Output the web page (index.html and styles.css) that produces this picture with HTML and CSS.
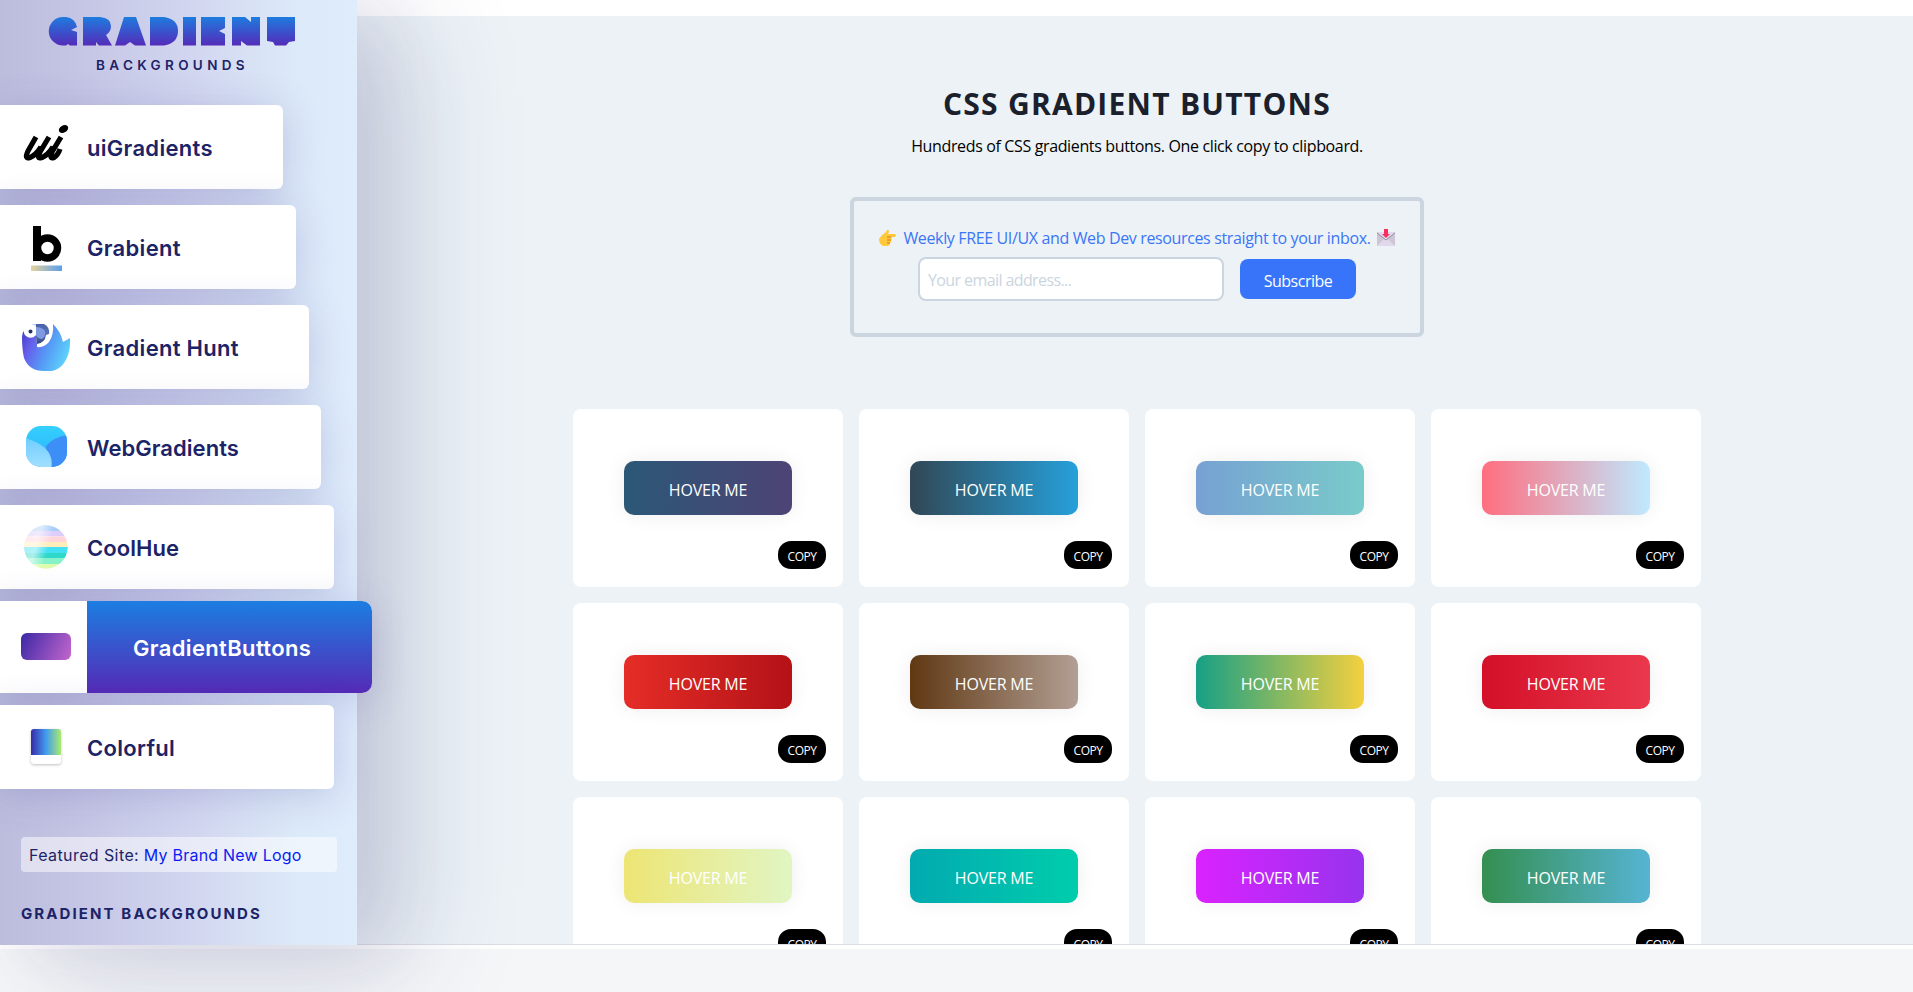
FILE: index.html
```html
<!DOCTYPE html>
<html lang="en">
<head>
<meta charset="utf-8">
<title>CSS Gradient Buttons</title>
<link rel="stylesheet" href="styles.css">
</head>
<body>
<div class="layout">
  <aside class="sidebar">
    <header class="brand">
      <svg class="wordmark" width="248" height="30" viewBox="0 0 248 30" role="img" aria-label="Gradient">
        <defs><linearGradient id="wm" x1="0" y1="0" x2="0" y2="30" gradientUnits="userSpaceOnUse"><stop offset="0" stop-color="#1c7ee0"/><stop offset="1" stop-color="#552ab8"/></linearGradient></defs>
        <g fill="url(#wm)">
          <rect x="135" y="1" width="13" height="28.500"/>
          <path d="M15 1H18Q27 2 29 11L23 14 29 16V29.500H22L20 28 18 29.500H15A14 14 0 0 1 15 1Z"/>
          <path d="M35 1H52Q63 2 63 10 63 16 58 19L64 29.500H51L48 26V29.500H35Z"/>
          <polygon points="76,1 88,1 98,29.500 87,29.500 82,26 77,29.500 67,29.500"/>
          <path d="M102 1H116Q130 3 130 15T116 29.500H102Z"/>
          <polygon points="153,1 177,1 177,12 171,15 177,18 177,29.500 153,29.500"/>
          <polygon points="184,1 197,1 203,6 203,1 212,1 212,29.500 199,29.500 193,25 193,29.500 184,29.500"/>
          <polygon points="219,1 247,1 247,25 241,26 238,29.500 227,29.500 225,26 219,25"/>
        </g>
      </svg>
      <p class="tagline">BACKGROUNDS</p>
    </header>
    <nav class="nav">
      <a class="item w1"><span class="icon">
        <svg width="48" height="48" viewBox="0 0 48 48"><g fill="none" stroke="#000" stroke-linejoin="round"><path stroke-width="5.200" d="M14 14 6 28Q2 36.500 8 34.500 14 32 19 24M27 14 18 29Q14 36.500 20 34.500 26 32 31 24M39 14 30 29Q27 36.500 32 34.500 36 32 38 26"/></g><ellipse cx="41.500" cy="6" rx="5" ry="3.500" transform="rotate(-30 41.500 6)"/></svg>
      </span><span class="label">uiGradients</span></a>
      <a class="item w2"><span class="icon">
        <svg width="48" height="48" viewBox="0 0 48 48"><defs><linearGradient id="gb"><stop stop-color="#e6d39c"/><stop offset="1" stop-color="#5a9eec"/></linearGradient></defs><path d="M11 3h8v35h-8z"/><circle cx="25.500" cy="25" r="10" fill="none" stroke="#000" stroke-width="7.500"/><path fill="url(#gb)" d="M9 42.500h31V49H9z"/></svg>
      </span><span class="label">Grabient</span></a>
      <a class="item w3"><span class="icon">
        <svg width="48" height="48" viewBox="0 0 48 48"><defs><linearGradient id="gh" x1="0" y1=".3" x2="1" y2=".7"><stop stop-color="#4a45cc"/><stop offset=".2" stop-color="#665fec"/><stop offset=".55" stop-color="#559bf6"/><stop offset="1" stop-color="#5fdafb"/></linearGradient><linearGradient id="bk" x1="0" y1="0" x2="0" y2="1"><stop stop-color="#4862a9"/><stop offset=".5" stop-color="#5873b8"/><stop offset="1" stop-color="#34457c"/></linearGradient></defs><path fill="url(#gh)" d="M14 1H30L31 1Q39 9 41 19L48 15Q49 30 42 40T22 48Q7 48 2 35Q0 26 0 14 1 2 14 1Z"/><path fill="#c5eafd" d="M1 9Q4 1 15 1V10L8 7Z"/><circle cx="8.500" cy="8" r="6.800" fill="#fff"/><circle cx="8.500" cy="8.500" r="2" fill="#223463"/><path fill="#fff" d="M14 1H31Q32 12 27 19 22 25 15 24V21L14 14Z"/><path fill="url(#bk)" d="M14 1H22Q28 4 27 11L24 12Q23 20 15 21L14 14Z"/><path fill="#7f9ae0" d="M14 4Q20 4 23 8 24 13 20 16 16 16 14 12Z"/></svg>
      </span><span class="label">Gradient Hunt</span></a>
      <a class="item w4"><span class="icon">
        <svg width="48" height="48" viewBox="0 0 48 48"><defs><clipPath id="wc"><rect x="4" y="3" width="41" height="41" rx="15"/></clipPath><linearGradient id="wa" x1="0" y1="0" x2="0" y2="1"><stop stop-color="#34d0ff"/><stop offset="1" stop-color="#2cadf5"/></linearGradient><linearGradient id="wb" x1="0" y1="0" x2="0" y2="1"><stop stop-color="#70ceff"/><stop offset="1" stop-color="#a4e0ff"/></linearGradient></defs><g clip-path="url(#wc)"><path fill="url(#wa)" d="M4 3h41v41H4z"/><path fill="#3e8ef7" d="M24 23Q33 13 48 12V46H26Z"/><path fill="url(#wb)" d="M3 15Q34 24 29 46H0Z"/></g></svg>
      </span><span class="label tight">WebGradients</span></a>
      <a class="item w5"><span class="icon">
        <svg width="48" height="48" viewBox="0 0 48 48"><defs><clipPath id="cc"><circle cx="24" cy="24" r="21.700"/></clipPath><linearGradient id="cg" x1="0" y1="0" x2="1" y2=".3"><stop offset=".1" stop-color="#fff" stop-opacity=".5"/><stop offset=".4" stop-color="#fff" stop-opacity=".6"/><stop offset=".65" stop-color="#fff" stop-opacity="0"/></linearGradient></defs><g clip-path="url(#cc)"><path fill="#a7cdf6" d="M0 0h48v8H0z"/><path fill="#dccdfb" d="M0 8h48v5.500H0z"/><path fill="#ffd5da" d="M0 13.500h48V19H0z"/><path fill="#feecb9" d="M0 19h48v5H0z"/><path fill="#43dff2" d="M0 24h48v6H0z"/><path fill="#30d8ca" d="M0 30h48v5H0z"/><path fill="#86f2c9" d="M0 35h48v6H0z"/><path fill="#dcfcab" d="M0 41h48v7H0z"/><path fill="url(#cg)" d="M0 0h48v48H0z"/></g></svg>
      </span><span class="label tight">CoolHue</span></a>
      <a class="item active"><span class="icon"><i class="pill"></i></span><span class="label">GradientButtons</span></a>
      <a class="item w5"><span class="icon"><i class="swatch"></i></span><span class="label">Colorful</span></a>
    </nav>
    <p class="featured"><span class="wide">Featured Site:</span> <a>My Brand New Logo</a></p>
    <h2 class="foot">GRADIENT BACKGROUNDS</h2>
  </aside>
  <main class="main">
    <h1>CSS GRADIENT BUTTONS</h1>
    <p class="sub">Hundreds of CSS gradients buttons. One click copy to clipboard.</p>
    <form class="signup">
      <p class="pitch">
        <svg width="18" height="18" viewBox="0 0 18 18"><path fill="#ffc83d" d="M0 10Q2 6 7 3L8 1Q10 0 10 3L9 5H16Q18 6 16 8H12Q14 9 12 11 13 13 11 14 11 17 8 17H4Q0 15 0 10Z"/><path stroke="#d67d00" fill="none" d="M8 8H12M8 11H12M8 14H11"/></svg>
        <span>Weekly FREE UI/UX and Web Dev resources straight to your inbox.</span>
        <svg width="18" height="18" viewBox="0 0 18 18"><path fill="#e1d8ec" d="M0 3h18v14H0z"/><path fill="#cdc4d6" d="M0 3 9 11 18 3V17L11 10H7L0 17Z"/><path stroke="#998ea4" fill="none" d="M0 4 9 11 18 4"/><path fill="#f92f60" d="M7 0h4v5h2L9 9 5 5h2z"/></svg>
      </p>
      <div class="fields"><input type="text" placeholder="Your email address..."><button class="subscribe" type="button">Subscribe</button></div>
    </form>
    <section class="grid">
      <article class="card"><button class="btn g1">HOVER ME</button><button class="copy">COPY</button></article>
      <article class="card"><button class="btn g2">HOVER ME</button><button class="copy">COPY</button></article>
      <article class="card"><button class="btn g3">HOVER ME</button><button class="copy">COPY</button></article>
      <article class="card"><button class="btn g4">HOVER ME</button><button class="copy">COPY</button></article>
      <article class="card"><button class="btn g5">HOVER ME</button><button class="copy">COPY</button></article>
      <article class="card"><button class="btn g6">HOVER ME</button><button class="copy">COPY</button></article>
      <article class="card"><button class="btn g7">HOVER ME</button><button class="copy">COPY</button></article>
      <article class="card"><button class="btn g8">HOVER ME</button><button class="copy">COPY</button></article>
      <article class="card"><button class="btn g9">HOVER ME</button><button class="copy">COPY</button></article>
      <article class="card"><button class="btn g10">HOVER ME</button><button class="copy">COPY</button></article>
      <article class="card"><button class="btn g11">HOVER ME</button><button class="copy">COPY</button></article>
      <article class="card"><button class="btn g12">HOVER ME</button><button class="copy">COPY</button></article>
    </section>
  </main>
</div>
</body>
</html>
```
FILE: styles.css
```css
* { box-sizing: border-box; }
html { background: #f4f6f8; }
body { margin: 0; height: 992px; overflow: hidden; font-family: "Open Sans", sans-serif; font-size: 16px; }
p, h1, h2 { margin: 0; }
button, input { font: inherit; letter-spacing: inherit; }
.layout { display: flex; height: 949px; background: #fff; }

/* Sidebar */
.sidebar { position: relative; z-index: 1; flex: none; width: 357px; height: 945px; display: flex; flex-direction: column; font-family: Inter, sans-serif; color: #1c2367; background: linear-gradient(90deg, #bcbddd 0%, #c3c3e3 18%, #d1d5ef 52%, #dce9f8 82%, #dfecfc 100%); box-shadow: 50px 20px 110px rgba(50, 50, 115, .18), 30px 10px 60px rgba(50, 50, 115, .07); }
.brand { height: 105px; padding: 16px 0 0 48px; }
.wordmark { display: block; }
.tagline { margin: 11px 0 0 48px; font-size: 13.500px; line-height: 17px; font-weight: 600; letter-spacing: 4.350px; }
.nav { display: flex; flex-direction: column; gap: 16px; }
.item { display: flex; align-items: center; height: 84px; padding-left: 22px; background: #fff; border-radius: 0 6px 6px 0; box-shadow: 0 6px 38px rgba(65, 60, 150, .21); }
.w1 { width: 283px; } .w2 { width: 296px; } .w3 { width: 309px; } .w4 { width: 321px; } .w5 { width: 334px; }
.icon { flex: none; width: 65px; height: 48px; display: flex; align-items: center; }
.label { font-size: 22px; line-height: 28px; font-weight: 600; letter-spacing: .3px; padding-top: 1px; }
.tight { letter-spacing: .05px; }
.active { width: 372px; height: 92px; margin: -4px 0; padding-left: 21px; border-radius: 0 10px 10px 0; overflow: hidden; }
.active .icon { width: 66px; }
.active .label { flex: 1; height: 92px; line-height: 92px; padding-left: 46px; letter-spacing: .35px; color: #fff; background: linear-gradient(#1c7ee2, #552ab6); }
.pill { width: 50px; height: 27px; margin-top: -1px; border-radius: 6px; background: linear-gradient(115deg, #3a28a5, #c466cd); }
.swatch { width: 30px; height: 35px; margin: -2px 0 0 9px; border-radius: 3px; background: linear-gradient(90deg, #372aa8, #429bf0 50%, #a9ea6e) top / 100% 26px no-repeat #fff; box-shadow: 0 1px 3px rgba(0, 0, 0, .25); }
.featured { width: 316px; height: 35px; margin: 48px 0 0 21px; padding-left: 8px; line-height: 36px; letter-spacing: .22px; border-radius: 4px; background: rgba(255, 255, 255, .5); }
.featured .wide { letter-spacing: .4px; }
.featured a { color: #0b1cf2; }
.foot { margin: 31px 0 0 21px; font-size: 15px; line-height: 22px; font-weight: 700; letter-spacing: 2.100px; }

/* Content */
.main { flex: 1; height: 929px; margin-top: 16px; padding: 65px 0 0 4px; overflow: hidden; display: flex; flex-direction: column; align-items: center; letter-spacing: -.36px; background: #ecf2f6; border-bottom: 1px solid #dcdde3; }
h1 { font-size: 30px; line-height: 45px; font-weight: 700; letter-spacing: 1.250px; color: #1a202c; }
.sub { margin-top: 8px; line-height: 24px; color: #000; }
.signup { flex: none; width: 574px; height: 140px; margin-top: 39px; padding-top: 25px; border: 4px solid #cbd5e0; border-radius: 6px; }
.pitch { display: flex; justify-content: center; align-items: center; gap: 6px; height: 24px; color: #3b76f6; white-space: nowrap; }
.fields { display: flex; align-items: center; gap: 16px; margin: 7px 0 0 64px; }
input { width: 306px; height: 44px; padding: 2px 8px 0; border: 2px solid #cbd5e0; border-radius: 8px; background: #fff; letter-spacing: -.6px; }
input::placeholder { color: #cbd5e0; }
.subscribe { width: 116px; height: 40px; padding: 3px 0 0; border: 0; border-radius: 8px; letter-spacing: -.5px; color: #fff; background: #3874fa; }
.grid { flex: none; display: grid; grid-template-columns: repeat(4, 270px); grid-auto-rows: 178px; gap: 16px; margin-top: 72px; }
.card { display: flex; flex-direction: column; align-items: center; padding-top: 52px; background: #fff; border-radius: 8px; }
.btn { width: 168px; height: 54px; padding: 3px 0 0; border: 0; border-radius: 10px; letter-spacing: -.2px; color: #fff; box-shadow: 0 0 20px #eee; }
.copy { align-self: flex-end; width: 48px; height: 28px; margin: 26px 17px 0 0; padding: 2px 0 0; border: 0; border-radius: 13px; background: #000; color: #fff; font-size: 12px; letter-spacing: -.5px; }
.g1 { background: linear-gradient(90deg, #2b5876, #4e4376); }
.g2 { background: linear-gradient(90deg, #314755, #26a0da); }
.g3 { background: linear-gradient(90deg, #77a1d3, #79cbca); }
.g4 { background: linear-gradient(90deg, #ff6e7f, #bfe9ff); }
.g5 { background: linear-gradient(90deg, #e52d27, #b31217); }
.g6 { background: linear-gradient(90deg, #603813, #b29f94); }
.g7 { background: linear-gradient(90deg, #16a085, #f4d03f); }
.g8 { background: linear-gradient(90deg, #d31027, #ea384d); }
.g9 { background: linear-gradient(90deg, #ede574, #e1f5c4); }
.g10 { background: linear-gradient(90deg, #02aab0, #00cdac); }
.g11 { background: linear-gradient(90deg, #da22ff, #9733ee); }
.g12 { background: linear-gradient(90deg, #348f50, #56b4d3); }
```
